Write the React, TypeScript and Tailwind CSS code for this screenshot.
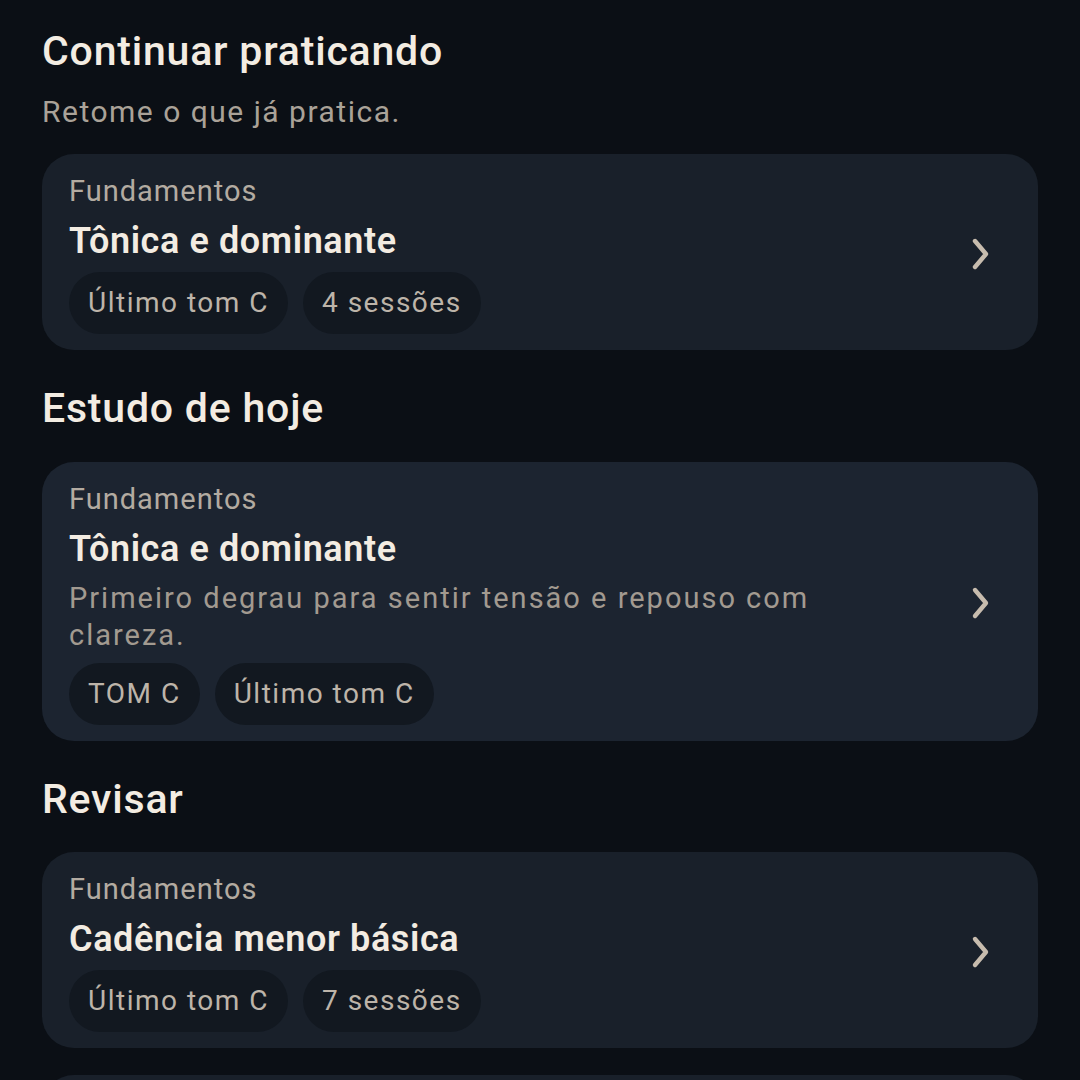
import React from 'react';

type Item = {
  group: string;
  title: string;
  desc?: string;
  chips: string[];
  highlight?: boolean;
};

const Chevron = () => (
  <svg width="24" height="34" viewBox="0 0 24 34" fill="none" stroke="#c7bcae" strokeWidth="4.4" strokeLinecap="round" strokeLinejoin="round">
    <path d="M6 4l11 13-11 13" />
  </svg>
);

const Card = ({ item }: { item: Item }) => (
  <div
    className={
      'flex items-center rounded-[32px] pl-[27px] pr-[45px] pt-[19px] pb-[16px] ' +
      (item.highlight ? 'bg-[#1c2430]' : 'bg-[#19202a]')
    }
  >
    <div className="flex-1 min-w-0">
      <div className="text-[29px] leading-[36px] tracking-[1px] text-[#b3aba1]">{item.group}</div>
      <div className="mt-[10px] text-[36px] leading-[44px] font-semibold tracking-[0.6px] text-[#f3ece2]">{item.title}</div>
      {item.desc && (
        <div className="mt-[9px] max-w-[830px] text-[29px] leading-[37px] tracking-[2px] text-[#a29a90]">{item.desc}</div>
      )}
      <div className="mt-[9px] flex gap-[15px]">
        {item.chips.map((c) => (
          <span
            key={c}
            className="h-[62px] flex items-center rounded-full bg-[#121820] px-[19px] text-[28px] tracking-[1.5px] text-[#bdb4a9]"
          >
            {c}
          </span>
        ))}
      </div>
    </div>
    <Chevron />
  </div>
);

export default function App() {
  const cont: Item = { group: 'Fundamentos', title: 'Tônica e dominante', chips: ['Último tom C', '4 sessões'] };
  const hoje: Item = {
    group: 'Fundamentos',
    title: 'Tônica e dominante',
    desc: 'Primeiro degrau para sentir tensão e repouso com clareza.',
    chips: ['TOM C', 'Último tom C'],
    highlight: true,
  };
  const rev: Item[] = [
    { group: 'Fundamentos', title: 'Cadência menor básica', chips: ['Último tom C', '7 sessões'] },
    { group: 'Fundamentos', title: 'Dominante secundária', chips: ['Último tom C', '2 sessões'] },
  ];

  return (
    <div
      className="h-[1080px] overflow-hidden bg-[#0b0f15] px-[42px] pt-[27px]"
      style={{ fontFamily: 'Roboto, "Noto Sans", sans-serif' }}
    >
      <h2 className="text-[41px] leading-[48px] font-medium tracking-[0.8px] text-[#f3ece2]">Continuar praticando</h2>
      <p className="mt-[18px] text-[30px] leading-[38px] tracking-[1.5px] text-[#aaa298]">Retome o que já pratica.</p>
      <div className="mt-[23px]">
        <Card item={cont} />
      </div>

      <h2 className="mt-[34px] text-[41px] leading-[48px] font-medium tracking-[0.8px] text-[#f3ece2]">Estudo de hoje</h2>
      <div className="mt-[30px]">
        <Card item={hoje} />
      </div>

      <h2 className="mt-[34px] text-[41px] leading-[48px] font-medium tracking-[0.8px] text-[#f3ece2]">Revisar</h2>
      <div className="mt-[29px] flex flex-col gap-[27px]">
        {rev.map((r) => (
          <Card key={r.title} item={r} />
        ))}
      </div>
    </div>
  );
}
